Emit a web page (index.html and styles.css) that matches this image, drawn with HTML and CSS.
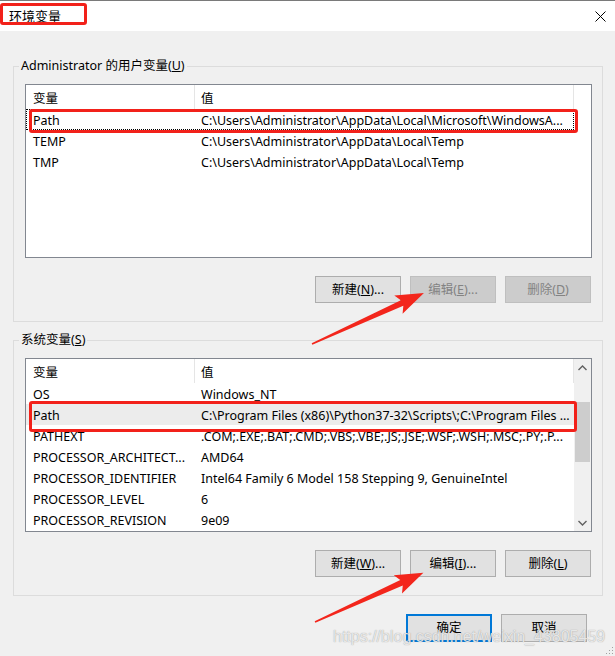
FILE: index.html
```html
<!DOCTYPE html>
<html lang="zh-CN">
<head>
<meta charset="utf-8">
<title>环境变量</title>
<link rel="stylesheet" href="styles.css">
</head>
<body>
<div class="window">
  <div class="titlebar">
    <span class="title">环境变量</span>
    <svg class="close" width="11" height="11" viewBox="0 0 11 11"><path d="M0.5 0.5 L10.5 10.5 M10.5 0.5 L0.5 10.5" stroke="#000" stroke-width="1" fill="none"/></svg>
  </div>
  <div class="content">
    <fieldset class="group">
      <legend>Administrator 的用户变量(<u>U</u>)</legend>
      <div class="list">
        <div class="list-main">
          <div class="head"><div class="c-name">变量</div><div class="c-val">值</div></div>
          <div class="row focus"><div class="c-name">Path</div><div class="c-val">C:\Users\Administrator\AppData\Local\Microsoft\WindowsA...</div></div>
          <div class="row"><div class="c-name">TEMP</div><div class="c-val">C:\Users\Administrator\AppData\Local\Temp</div></div>
          <div class="row"><div class="c-name">TMP</div><div class="c-val">C:\Users\Administrator\AppData\Local\Temp</div></div>
        </div>
        <div class="list-side"></div>
      </div>
      <div class="buttons">
        <div class="btn">新建(<u>N</u>)...</div>
        <div class="btn disabled">编辑(<u>E</u>)...</div>
        <div class="btn disabled">删除(<u>D</u>)</div>
      </div>
    </fieldset>

    <fieldset class="group second">
      <legend>系统变量(<u>S</u>)</legend>
      <div class="list">
        <div class="list-main">
          <div class="head"><div class="c-name">变量</div><div class="c-val">值</div></div>
          <div class="row"><div class="c-name">OS</div><div class="c-val">Windows_NT</div></div>
          <div class="row selected"><div class="c-name">Path</div><div class="c-val">C:\Program Files (x86)\Python37-32\Scripts\;C:\Program Files ...</div></div>
          <div class="row"><div class="c-name">PATHEXT</div><div class="c-val">.COM;.EXE;.BAT;.CMD;.VBS;.VBE;.JS;.JSE;.WSF;.WSH;.MSC;.PY;.P...</div></div>
          <div class="row"><div class="c-name">PROCESSOR_ARCHITECT...</div><div class="c-val">AMD64</div></div>
          <div class="row"><div class="c-name">PROCESSOR_IDENTIFIER</div><div class="c-val">Intel64 Family 6 Model 158 Stepping 9, GenuineIntel</div></div>
          <div class="row"><div class="c-name">PROCESSOR_LEVEL</div><div class="c-val">6</div></div>
          <div class="row"><div class="c-name">PROCESSOR_REVISION</div><div class="c-val">9e09</div></div>
        </div>
        <div class="list-side scrollbar">
          <div class="sb-btn"><svg width="9" height="6" viewBox="0 0 9 6"><path d="M0.5 5 L4.5 1 L8.5 5" stroke="#606060" stroke-width="1.4" fill="none"/></svg></div>
          <div class="sb-track"><div class="sb-thumb"></div></div>
          <div class="sb-btn"><svg width="9" height="6" viewBox="0 0 9 6"><path d="M0.5 1 L4.5 5 L8.5 1" stroke="#606060" stroke-width="1.4" fill="none"/></svg></div>
        </div>
      </div>
      <div class="buttons">
        <div class="btn">新建(<u>W</u>)...</div>
        <div class="btn">编辑(<u>I</u>)...</div>
        <div class="btn">删除(<u>L</u>)</div>
      </div>
    </fieldset>

    <div class="footer">
      <div class="btn big default">确定</div>
      <div class="btn big">取消</div>
    </div>
  </div>

  <div class="mark mark-title"></div>
  <div class="mark mark-user"></div>
  <div class="mark mark-sys"></div>

  <svg class="arrows" width="615" height="656" viewBox="0 0 615 656">
    <polygon transform="translate(312,344) rotate(-24.5)" points="0,-0.8 99,-3 95,-10 123,0 95,10 99,3 0,0.8" fill="#f3261c"/>
    <polygon transform="translate(315,622) rotate(-24.4)" points="0,-0.8 95,-3 91,-10 119,0 91,10 95,3 0,0.8" fill="#f3261c"/>
  </svg>

  <div class="watermark">https://blog.csdn.net/weixin_43805459</div>

  <svg class="grip" width="8" height="8" viewBox="0 0 8 8">
    <rect x="6" y="0" width="1" height="1" fill="#a0a0a0"/>
    <rect x="3" y="3" width="1" height="1" fill="#a0a0a0"/>
    <rect x="6" y="3" width="1" height="1" fill="#a0a0a0"/>
    <rect x="0" y="6" width="1" height="1" fill="#a0a0a0"/>
    <rect x="3" y="6" width="1" height="1" fill="#a0a0a0"/>
    <rect x="6" y="6" width="1" height="1" fill="#a0a0a0"/>
  </svg>
</div>
</body>
</html>
```

FILE: styles.css
```css
* { box-sizing: border-box; }

body {
  margin: 0;
  background: #f0f0f0;
  font-family: "Noto Sans", "Noto Sans CJK SC", sans-serif;
  font-size: 12.5px;
  color: #000;
}

u { text-decoration: underline; text-underline-offset: 1px; }

.window {
  position: relative;
  width: 615px;
  height: 656px;
  background: #f0f0f0;
  overflow: hidden;
}

.titlebar {
  height: 31px;
  background: #fff;
  border-top: 1px solid #7a7a7a;
  display: flex;
  align-items: center;
  justify-content: space-between;
  padding: 0 9px 0 9px;
}

.title { font-size: 13px; line-height: 16px; }

.content {
  padding: 27px 12px 0 13px;
}

.group {
  margin: 0;
  padding: 10px 10px 18px 11px;
  border: 1px solid #dcdcdc;
  min-width: 0;
}

.group.second { margin-top: 10px; }

.group legend {
  padding: 0 2px;
  margin-left: -6px;
  line-height: 16px;
  font-size: 12.5px;
}

.list {
  height: 174px;
  border: 1px solid #828790;
  background: #fff;
  display: grid;
  grid-template-columns: 1fr 17px;
}

.list-main { overflow: hidden; }

.head, .row {
  display: flex;
  align-items: center;
  white-space: nowrap;
}

.head { height: 24px; }
.row { height: 21px; padding-top: 1px; }

.c-name {
  width: 169px;
  flex: none;
  padding-left: 7px;
  overflow: hidden;
}

.c-val {
  width: 379px;
  flex: none;
  padding-left: 6px;
  overflow: hidden;
}

.head .c-name,
.head .c-val {
  height: 24px;
  display: flex;
  align-items: center;
  border-right: 1px solid #e5e5e5;
}

.row.focus { outline: 1px dotted #000; outline-offset: -1px; }
.row.selected { background: #ececec; }

.scrollbar {
  background: #f0f0f0;
  display: flex;
  flex-direction: column;
}

.sb-btn {
  height: 17px;
  display: flex;
  align-items: center;
  justify-content: center;
}

.sb-track { flex: 1; }

.sb-thumb {
  margin: 26px 1px 0 1px;
  height: 60px;
  background: #cdcdcd;
}

.buttons {
  display: flex;
  justify-content: flex-end;
  gap: 9px;
  margin-top: 18px;
  padding-right: 1px;
}

.btn {
  width: 86px;
  height: 27px;
  border: 1px solid #adadad;
  background: #e1e1e1;
  display: flex;
  align-items: center;
  justify-content: center;
  line-height: 16px;
}

.btn.disabled {
  background: #cccccc;
  border-color: #bfbfbf;
  color: #838383;
}

.footer {
  display: flex;
  justify-content: flex-end;
  gap: 9px;
  margin-top: 18px;
  padding-right: 16px;
}

.btn.big { height: 28px; }
.btn.default { border: 2px solid #0078d7; }

.mark {
  position: absolute;
  border: 3px solid #f2211a;
  border-radius: 3px;
}
.mark-title { left: 0; top: 3px; width: 87px; height: 22px; }
.mark-user { left: 29px; top: 109px; width: 549px; height: 24px; }
.mark-sys { left: 29px; top: 401px; width: 548px; height: 31px; }

.arrows { position: absolute; left: 0; top: 0; pointer-events: none; }

.watermark {
  position: absolute;
  left: 333px;
  top: 627px;
  font-family: "Liberation Sans", Arial, sans-serif;
  font-size: 16px;
  line-height: 20px;
  color: rgba(245, 245, 245, 0.85);
  text-shadow: 0 0 1px rgba(120, 120, 120, 0.8);
  white-space: nowrap;
}

.grip { position: absolute; right: 1px; bottom: 1px; }
```
